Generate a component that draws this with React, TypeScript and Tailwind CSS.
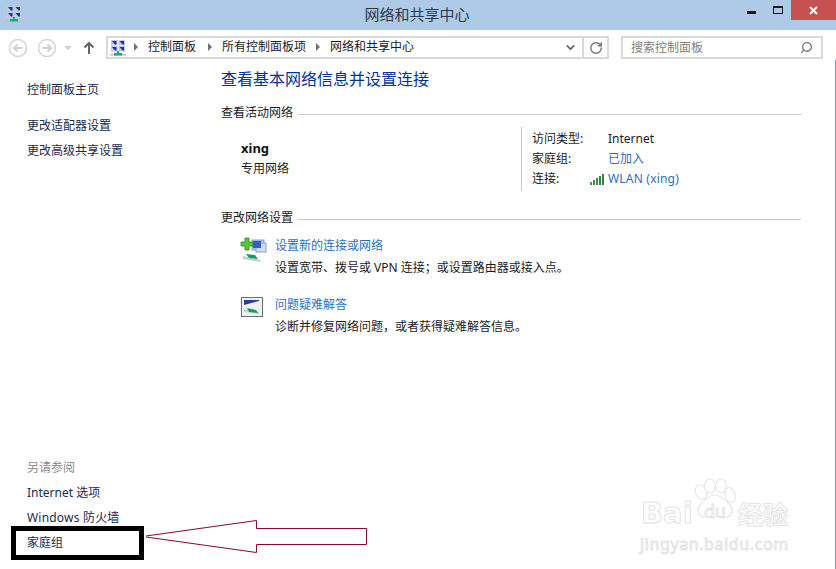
import React from 'react';
import { ChevronDown, RotateCw, Search } from 'lucide-react';

const font = 'font-["Noto_Sans","Noto_Sans_CJK_SC",sans-serif]';

const NetworkIcon = () => (
    <svg width="16" height="16" viewBox="0 0 16 16" className="shrink-0">
        <rect x="1" y="0" width="6.5" height="5.5" fill="#c4cade" />
        <rect x="8.5" y="0" width="6.5" height="5.5" fill="#c4cade" />
        <rect x="1" y="6" width="6.5" height="5.5" fill="#c4cade" />
        <rect x="8.5" y="6" width="6.5" height="5.5" fill="#c4cade" />
        <path d="M2 1h4.5v3.5H5zM9.5 1H14v3.5h-1.5zM2 7h4.5v3.5H5zM9.5 7H14v3.5h-1.5z" fill="#1b2fb8" />
        <rect x="0" y="14" width="16" height="1.5" fill="#b8c0c8" />
        <rect x="4" y="13" width="8" height="2.5" fill="#10b070" />
        <rect x="7" y="11" width="2" height="2" fill="#10b070" />
    </svg>
);

const CircleArrow = ({ flip }: { flip?: boolean }) => (
    <svg width="20" height="20" viewBox="0 0 20 20" className={flip ? 'rotate-180' : ''}>
        <circle cx="10" cy="10" r="8.5" fill="none" stroke="#d4d4d4" strokeWidth="1.5" />
        <path d="M14.5 10H6M9.5 6.5L6 10l3.5 3.5" fill="none" stroke="#d0d0d0" strokeWidth="1.8" />
    </svg>
);

const SectionTitle = ({ text }: { text: string }) => (
    <div className="flex items-center gap-[5px] h-[16px]">
        <span className="text-[12px] leading-[16px] text-[#1a1a1a]">{text}</span>
        <div className="flex-1 h-px bg-[#c8c8c8] mt-[3px]" />
    </div>
);

const SetupIcon = () => (
    <svg width="28" height="28" viewBox="0 0 28 28" className="shrink-0">
        <rect x="12" y="4" width="12" height="10" fill="#a9c4ee" stroke="#8aa0c8" />
        <rect x="16" y="7" width="10" height="9" fill="#cfe0f6" stroke="#8aa0c8" />
        <rect x="13" y="5" width="8" height="7" fill="#2f5fc8" />
        <path d="M3 20l17 4 1 2L3 23z" fill="#c4ccd0" />
        <path d="M6 18l9 1 3 4-9-1z" fill="#10a060" />
        <path d="M5 2h4v4h4v4H9v4H5v-4H1V6h4z" fill="#5cc43c" stroke="#2c8a1c" strokeWidth="0.8" />
    </svg>
);

const FixIcon = () => (
    <svg width="28" height="28" viewBox="0 0 28 28" className="shrink-0">
        <rect x="1.5" y="2.5" width="21" height="19" fill="#eef0f2" stroke="#6a7078" />
        <path d="M4 5h15v1l-15 4z" fill="#2440a8" />
        <path d="M4 14l15 3v2l-15-2z" fill="#c8d0d4" />
        <path d="M7 13l9 2 2 3-9-1z" fill="#10a060" />
    </svg>
);

const Caret = ({ className }: { className: string }) => (
    <span className={`w-0 h-0 border-y-[4px] border-y-transparent border-l-[4px] border-l-[#707070] ${className}`} />
);

const App = () => {
    return (
        <div className={`relative w-[836px] h-[569px] overflow-hidden bg-white flex flex-col ${font}`}>
            {/* title bar */}
            <div className="h-[30px] shrink-0 bg-[#aecae6] flex items-start">
                <div className="pl-[6px] pt-[6px]"><NetworkIcon /></div>
                <div className="flex-1 text-center text-[15px] leading-[28px] text-[#2a3a4a] pl-[65px]">网络和共享中心</div>
                <div className="flex items-start shrink-0">
                    <div className="w-[9px] h-[3px] bg-[#1a1a1a] mt-[11px] mr-[17px]" />
                    <div className="w-[10px] h-[8px] border border-t-[2px] border-[#1a1a1a] mt-[6px] mr-[8px]" />
                    <div className="w-[45px] h-[20px] bg-[#c75050] flex items-center justify-center">
                        <svg width="9" height="9" viewBox="0 0 9 9"><path d="M1 1l7 7M8 1L1 8" stroke="#fff" strokeWidth="2" /></svg>
                    </div>
                </div>
            </div>

            {/* toolbar */}
            <div className="h-[30px] shrink-0 flex items-start pt-[6px]">
                <div className="w-[106px] shrink-0 flex items-center h-[23px] pl-[8px]">
                    <CircleArrow />
                    <div className="ml-[9px]"><CircleArrow flip /></div>
                    <div className="ml-[7px] w-0 h-0 border-x-[4px] border-x-transparent border-t-[4px] border-t-[#d0d0d0]" />
                    <svg width="12" height="14" viewBox="0 0 12 14" className="ml-[11px]"><path d="M6 13V2M1.5 6.5L6 2l4.5 4.5" fill="none" stroke="#666" strokeWidth="2" /></svg>
                </div>
                <div className="w-[503px] h-[23px] border-2 border-[#d9d9d9] flex items-center shrink-0">
                    <div className="pl-[2px]"><NetworkIcon /></div>
                    <div className="flex items-center text-[12px] leading-[17px] text-[#1a1a1a] flex-1 -mt-[2px]">
                        <Caret className="ml-[8px] mr-[10px]" />
                        <span>控制面板</span>
                        <Caret className="ml-[12px] mr-[10px]" />
                        <span>所有控制面板项</span>
                        <Caret className="ml-[10px] mr-[10px]" />
                        <span>网络和共享中心</span>
                    </div>
                    <ChevronDown size={13} strokeWidth={3} className="text-[#666] mr-[5px]" />
                    <div className="w-[25px] h-full border-l-2 border-[#d9d9d9] flex items-center justify-center">
                        <RotateCw size={14} strokeWidth={2.5} className="text-[#777]" />
                    </div>
                </div>
                <div className="ml-[12px] w-[202px] h-[23px] border-2 border-[#d9d9d9] flex items-center justify-between px-[8px] shrink-0">
                    <span className="text-[12px] text-[#808080]">搜索控制面板</span>
                    <Search size={13} strokeWidth={2.5} className="text-[#777] -scale-x-100" />
                </div>
            </div>

            {/* body */}
            <div className="flex-1 flex min-h-0 border-r border-[#8a9ab0]">
                <aside className="w-[221px] shrink-0 pl-[27px] pb-[17px] flex flex-col justify-between text-[12px] leading-[18px] text-[#1a2a50]">
                    <div className="pt-[21px] flex flex-col">
                        <div>控制面板主页</div>
                        <div className="mt-[18px]">更改适配器设置</div>
                        <div className="mt-[7px]">更改高级共享设置</div>
                    </div>
                    <div className="flex flex-col gap-[7px]">
                        <div className="text-[#8a8a8a]">另请参阅</div>
                        <div>Internet 选项</div>
                        <div className="tracking-[0.2px]">Windows 防火墙</div>
                        <div>家庭组</div>
                    </div>
                </aside>

                <main className="w-[580px] shrink-0">
                    <h1 className="text-[16px] leading-[20px] text-[#003399] mt-[9px] font-normal">查看基本网络信息并设置连接</h1>
                    <div className="mt-[16px]"><SectionTitle text="查看活动网络" /></div>

                    <div className="flex mt-[6px] h-[64px]">
                        <div className="w-[300px] pl-[20px] pt-[11px]">
                            <div className="text-[13px] leading-[21px] font-bold text-[#111]">xing</div>
                            <div className="text-[12px] leading-[20px] text-[#1a1a1a]">专用网络</div>
                        </div>
                        <div className="border-l border-[#c8c8c8] pl-[10px] pt-[2px] text-[12px] leading-[20px] text-[#1a1a1a]">
                            <div className="flex"><span className="w-[76px]">访问类型:</span><span>Internet</span></div>
                            <div className="flex"><span className="w-[76px]">家庭组:</span><span className="text-[#2a6fc4]">已加入</span></div>
                            <div className="flex items-center">
                                <span className="w-[58px]">连接:</span>
                                <svg width="15" height="11" viewBox="0 0 15 11" className="mr-[3px]">
                                    <rect x="0" y="8" width="2" height="3" fill="#4c9a50" />
                                    <rect x="3" y="6" width="2" height="5" fill="#3d8f48" />
                                    <rect x="6" y="4" width="2" height="7" fill="#3d8f48" />
                                    <rect x="9" y="2" width="2" height="9" fill="#2f8440" />
                                    <rect x="12" y="0" width="2" height="11" fill="#2f8440" />
                                </svg>
                                <span className="text-[#2a6fc4] tracking-[0.2px]">WLAN (xing)</span>
                            </div>
                        </div>
                    </div>

                    <div className="mt-[19px]"><SectionTitle text="更改网络设置" /></div>

                    <div className="flex mt-[10px] pl-[19px] gap-[7px] text-[12px] leading-[22px]">
                        <SetupIcon />
                        <div className="-mt-[1px]">
                            <div className="text-[#2a6fc4]">设置新的连接或网络</div>
                            <div className="text-[#1a1a1a]">{'设置宽带、拨号或 VPN 连接\uFF1B或设置路由器或接入点。'}</div>
                        </div>
                    </div>
                    <div className="flex mt-[16px] pl-[19px] gap-[7px] text-[12px] leading-[22px]">
                        <FixIcon />
                        <div className="-mt-[1px]">
                            <div className="text-[#2a6fc4]">问题疑难解答</div>
                            <div className="text-[#1a1a1a]">{'诊断并修复网络问题\uFF0C或者获得疑难解答信息。'}</div>
                        </div>
                    </div>
                </main>
            </div>

            {/* annotation box and arrow */}
            <div className="absolute left-[11px] top-[526px] w-[133px] h-[34px] border-[5px] border-black" />
            <svg width="226" height="36" viewBox="0 0 226 36" className="absolute left-[145px] top-[519px]">
                <path d="M1 17 L111.5 1.5 V9.5 H221.5 V25.5 H111.5 V33.5 L1 18" fill="none" stroke="#8b0a28" strokeWidth="1" />
            </svg>

            {/* watermark */}
            <div className="absolute left-[640px] top-[478px] w-[190px] h-[76px] pointer-events-none">
                <svg width="46" height="42" viewBox="0 0 46 42" className="absolute left-[52px] top-0">
                    <g fill="#fff" stroke="#e6e6e6" strokeWidth="1.2">
                        <ellipse cx="9" cy="14" rx="5.5" ry="7.5" transform="rotate(-20 9 14)" />
                        <ellipse cx="18" cy="8" rx="5.5" ry="7" />
                        <ellipse cx="29" cy="8" rx="5.5" ry="7" />
                        <ellipse cx="38" cy="17" rx="5" ry="7.5" transform="rotate(-15 38 17)" />
                        <path d="M23 17c7 0 9 5 14 9 6 5 3 14-5 13-6-1-12-1-18 0-8 1-11-8-5-13 5-4 7-9 14-9z" />
                    </g>
                </svg>
                <span className='absolute left-[1px] top-[20px] text-[29px] leading-[30px] font-bold font-["DejaVu_Sans",sans-serif] text-white [-webkit-text-stroke:1px_#e4e4e4]'>Bai</span>
                <span className="absolute left-[64px] top-[23px] text-[18px] leading-[20px] text-white [-webkit-text-stroke:1px_#e4e4e4]">du</span>
                <span className="absolute left-[98px] top-[22px] text-[25px] leading-[28px] font-bold text-white [-webkit-text-stroke:1px_#e4e4e4]">经验</span>
                <span className="absolute left-[0px] top-[56px] text-[16px] leading-[20px] tracking-[0.6px] text-white [-webkit-text-stroke:1px_#e4e4e4]">jingyan.baidu.com</span>
            </div>
        </div>
    );
};

export default App;
